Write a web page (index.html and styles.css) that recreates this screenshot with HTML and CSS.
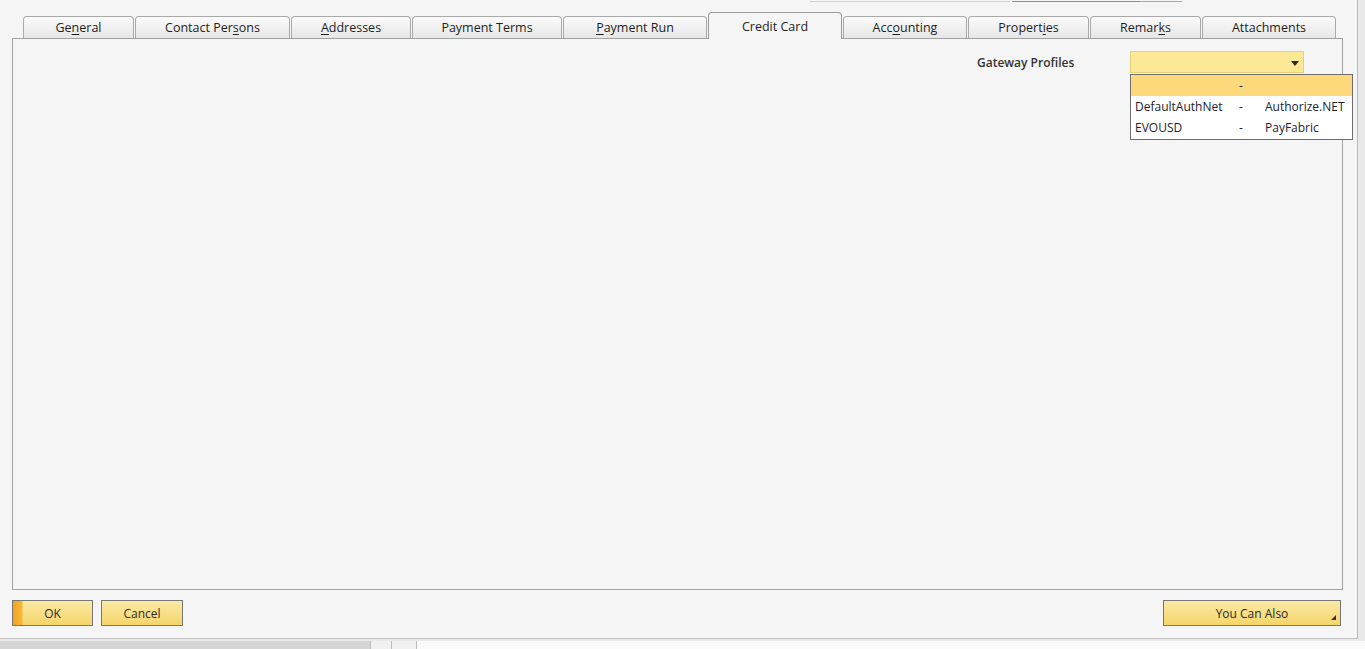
FILE: index.html
```html
<!DOCTYPE html>
<html lang="en">

<head>
  <meta charset="UTF-8">
  <title>Business Partner Master Data - Credit Card</title>
  <link rel="stylesheet" href="styles.css">
</head>

<body>
  <div class="window">
    <!-- bottom edge of the header fields above the tabs -->
    <div class="header-edge">
      <span class="edge-field"></span>
      <span class="edge-field dark"></span>
      <span class="edge-field small"></span>
    </div>

    <div class="tabs">
      <div class="tab w-general">Ge<u>n</u>eral</div>
      <div class="tab w-contact">Contact Per<u>s</u>ons</div>
      <div class="tab w-addr"><u>A</u>ddresses</div>
      <div class="tab w-terms">Payment Terms</div>
      <div class="tab w-run"><u>P</u>ayment Run</div>
      <div class="tab active w-card">Credit Card</div>
      <div class="tab w-acct">Acc<u>o</u>unting</div>
      <div class="tab w-props">Propert<u>i</u>es</div>
      <div class="tab w-remarks">Remar<u>k</u>s</div>
      <div class="tab w-attach">Attachments</div>
    </div>

    <div class="panel">
      <div class="field-row">
        <label class="field-label">Gateway Profiles</label>
        <div class="combo">
          <div class="combo-box">
            <span class="combo-arrow"></span>
          </div>
          <div class="combo-list">
            <div class="combo-item selected">
              <span class="col-code"></span><span class="col-dash">-</span><span class="col-name"></span>
            </div>
            <div class="combo-item">
              <span class="col-code">DefaultAuthNet</span><span class="col-dash">-</span><span class="col-name">Authorize.NET</span>
            </div>
            <div class="combo-item">
              <span class="col-code">EVOUSD</span><span class="col-dash">-</span><span class="col-name">PayFabric</span>
            </div>
          </div>
        </div>
      </div>
    </div>

    <div class="actions">
      <button class="btn btn-ok">OK</button>
      <button class="btn btn-cancel">Cancel</button>
      <div class="spacer"></div>
      <button class="btn btn-more">You Can Also<span class="corner"></span></button>
    </div>
  </div>

  <div class="statusbar">
    <div class="status-fill"></div>
    <div class="status-cell"></div>
    <div class="status-cell narrow"></div>
    <div class="status-rest"></div>
  </div>
</body>

</html>
```

FILE: styles.css
```css
body {
  margin: 0;
  background: #e9e9e9;
  font-family: "Open Sans", "DejaVu Sans", sans-serif;
  font-size: 12px;
  color: #2b2b2b;
  overflow: hidden;
}

.window {
  width: 1357px;
  height: 638px;
  background: #f5f5f5;
  border-right: 1px solid #b9b9b9;
  border-bottom: 1px solid #c4c4c4;
  display: flex;
  flex-direction: column;
}

.header-edge {
  display: flex;
  height: 2px;
  margin-left: 810px;
}

.edge-field {
  width: 200px;
  border-bottom: 1px solid #c9d3dc;
}

.edge-field.dark {
  width: 128px;
  margin-left: 2px;
  border-bottom: 1px solid #8e8e8e;
}

.edge-field.small {
  width: 42px;
  border-bottom: 1px solid #a6a6a6;
}

/* tab strip */
.tabs {
  display: flex;
  align-items: flex-end;
  height: 26px;
  margin-top: 10px;
  padding-left: 23px;
  position: relative;
  z-index: 1;
}

.tab {
  height: 22px;
  margin-right: 1px;
  border: 1px solid #a9a9a9;
  border-bottom: none;
  border-radius: 4px 4px 0 0;
  background: linear-gradient(#fbfbfb, #e6e6e6);
  text-align: center;
  line-height: 22px;
  font-size: 12.5px;
  box-sizing: border-box;
  color: #1e1e1e;
}

.tab u {
  text-underline-offset: 2px;
}

.tab.active {
  background: #f5f5f5;
  border-color: #999;
  line-height: 27px;
  margin-bottom: -1px;
  height: 27px;
}

.w-general { width: 111px; }
.w-contact { width: 155px; }
.w-addr { width: 120px; }
.w-terms { width: 150px; }
.w-run { width: 144px; }
.w-card { width: 134px; }
.w-acct { width: 124px; }
.w-props { width: 121px; }
.w-remarks { width: 111px; }
.w-attach { width: 134px; }

/* tab page */
.panel {
  height: 552px;
  margin: 0 14px 0 12px;
  border: 1px solid #a2a2a2;
  background: #f5f5f5;
  box-sizing: border-box;
  position: relative;
}

.field-row {
  display: flex;
  justify-content: flex-end;
  align-items: center;
  margin-top: 12px;
  padding-right: 38px;
}

.field-label {
  width: 153px;
  font-weight: 600;
  font-size: 12px;
  color: #333;
}

.combo {
  position: relative;
}

.combo-box {
  width: 174px;
  height: 22px;
  box-sizing: border-box;
  border: 1px solid #e4cf7a;
  background: #fde995;
  position: relative;
}

.combo-arrow {
  position: absolute;
  right: 4px;
  top: 9px;
  border-left: 4px solid transparent;
  border-right: 4px solid transparent;
  border-top: 5px solid #2a2a2a;
}

.combo-list {
  position: absolute;
  left: 0;
  top: 23px;
  width: 223px;
  border: 1px solid #6e6e6e;
  background: #fff;
  box-sizing: border-box;
  padding-bottom: 1px;
  z-index: 2;
}

.combo-item {
  display: flex;
  height: 21px;
  line-height: 21px;
  font-size: 12px;
  color: #1c1c30;
}

.combo-item.selected {
  background: #fdd97c;
}

.col-code {
  width: 104px;
  padding-left: 4px;
}

.col-dash {
  width: 26px;
}

.col-name {
  flex: 1;
}

/* bottom buttons */
.actions {
  display: flex;
  align-items: center;
  margin: 10px 16px 0 12px;
  gap: 8px;
}

.spacer {
  flex: 1;
}

.btn {
  height: 26px;
  border: 1px solid #777;
  background: linear-gradient(#fbeaa6, #f5d569);
  font-family: inherit;
  font-size: 12px;
  color: #2a2a2a;
  padding: 0;
  position: relative;
  box-sizing: border-box;
}

.btn-ok {
  width: 81px;
  background: linear-gradient(90deg, #f5a11c 0, #f8b73c 9px, transparent 10px),
    linear-gradient(#fbeaa6, #f5d569);
}

.btn-cancel {
  width: 82px;
}

.btn-more {
  width: 178px;
}

.corner {
  position: absolute;
  right: 4px;
  bottom: 5px;
  border-left: 5px solid transparent;
  border-bottom: 5px solid #333;
}

/* strip along the bottom of the screen */
.statusbar {
  display: flex;
  height: 10px;
  margin-top: 2px;
}

.status-fill {
  width: 370px;
  background: #d5d5d5;
}

.status-cell {
  width: 20px;
  background: #f0f0f0;
  border-left: 1px solid #bcbcbc;
}

.status-cell.narrow {
  width: 24px;
}

.status-rest {
  flex: 1;
  background: #fafafa;
  border-left: 1px solid #bcbcbc;
}
```
